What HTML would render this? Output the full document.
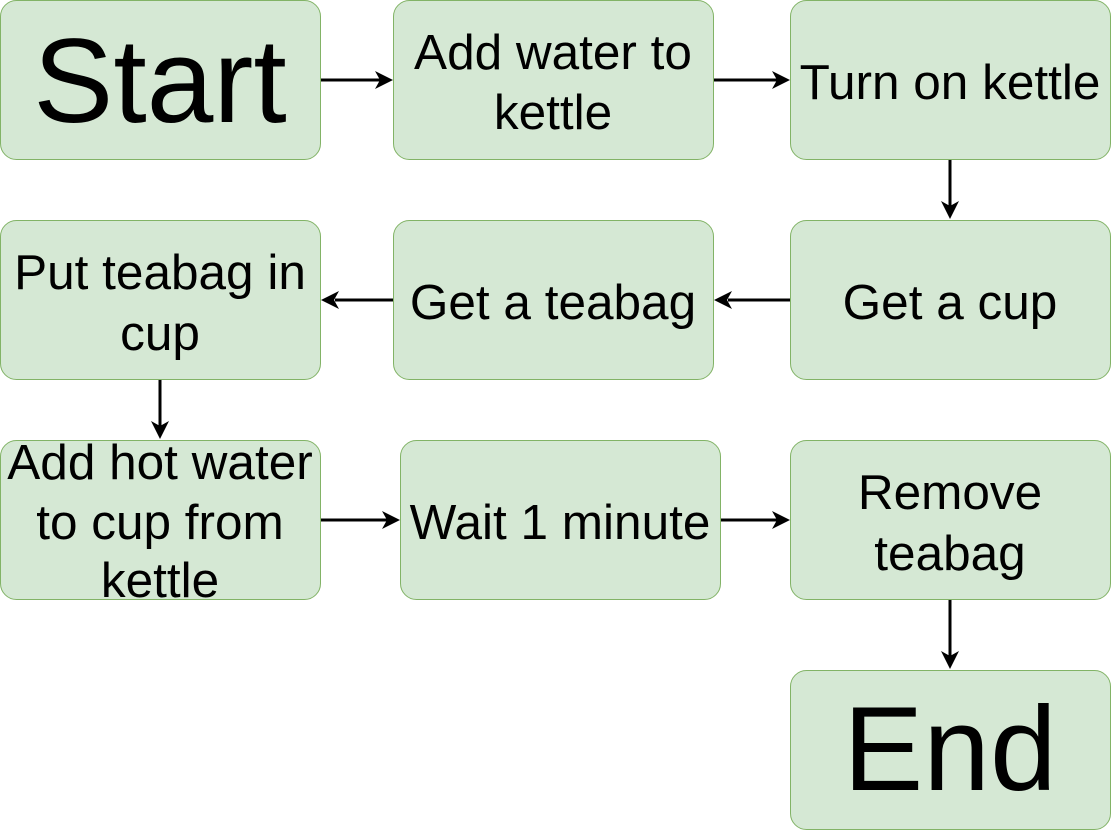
<!DOCTYPE html><html><head><style>body{margin:0;background:#fff}</style></head><body>
<svg width="1111" height="831" xmlns="http://www.w3.org/2000/svg" font-family="Liberation Sans, sans-serif" text-anchor="middle" fill="#000">
<g fill="#d5e8d4" stroke="#82b366" stroke-width="1">
<rect x="0.5" y="0.5" width="320" height="159" rx="16"/>
<rect x="393.5" y="0.5" width="320" height="159" rx="16"/>
<rect x="790.5" y="0.5" width="320" height="159" rx="16"/>
<rect x="0.5" y="220.5" width="320" height="159" rx="16"/>
<rect x="393.5" y="220.5" width="320" height="159" rx="16"/>
<rect x="790.5" y="220.5" width="320" height="159" rx="16"/>
<rect x="0.5" y="440.5" width="320" height="159" rx="16"/>
<rect x="400.5" y="440.5" width="320" height="159" rx="16"/>
<rect x="790.5" y="440.5" width="320" height="159" rx="16"/>
<rect x="790.5" y="670.5" width="320" height="159" rx="16"/>
</g>
<g stroke="#000" stroke-width="3">
<line x1="321" y1="80" x2="380" y2="80"/>
<line x1="714" y1="80" x2="777" y2="80"/>
<line x1="950" y1="160" x2="950" y2="206"/>
<line x1="790" y1="300" x2="728" y2="300"/>
<line x1="393" y1="300" x2="335" y2="300"/>
<line x1="160" y1="380" x2="160" y2="426"/>
<line x1="321" y1="520" x2="387" y2="520"/>
<line x1="721" y1="520" x2="777" y2="520"/>
<line x1="950" y1="600" x2="950" y2="656"/>
</g>
<g>
<path d="M393 80 L375 71 L380 80 L375 89Z"/>
<path d="M790 80 L772 71 L777 80 L772 89Z"/>
<path d="M950 219 L941 201 L950 206 L959 201Z"/>
<path d="M714 300 L732 291 L727 300 L732 309Z"/>
<path d="M321 300 L339 291 L334 300 L339 309Z"/>
<path d="M160 439 L151 421 L160 426 L169 421Z"/>
<path d="M400 520 L382 511 L387 520 L382 529Z"/>
<path d="M790 520 L772 511 L777 520 L772 529Z"/>
<path d="M950 669 L941 651 L950 656 L959 651Z"/>
</g>
<g font-size="49.5">
<text x="160" y="122" font-size="120">Start</text>
<text x="553" y="69">Add water to</text>
<text x="553" y="129">kettle</text>
<text x="950" y="99">Turn on kettle</text>
<text x="160" y="289">Put teabag in</text>
<text x="160" y="350">cup</text>
<text x="553" y="319">Get a teabag</text>
<text x="950" y="319">Get a cup</text>
<text x="160" y="479">Add hot water</text>
<text x="160" y="539">to cup from</text>
<text x="160" y="597">kettle</text>
<text x="560" y="539">Wait 1 minute</text>
<text x="950" y="509">Remove</text>
<text x="950" y="570">teabag</text>
<text x="950" y="790" font-size="120">End</text>
</g>
</svg>
</body></html>
